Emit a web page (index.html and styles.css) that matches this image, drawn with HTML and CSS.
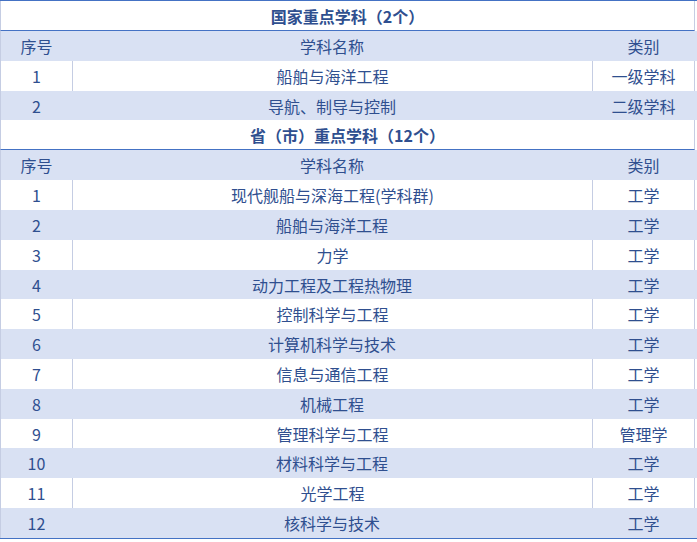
FILE: index.html
```html
<!DOCTYPE html>
<html lang="zh-CN">
<head>
<meta charset="utf-8">
<title>重点学科</title>
<link rel="stylesheet" href="styles.css">
</head>
<body>
<div class="table">
  <div class="title">国家重点学科（2个）</div>
  <div class="row head"><div class="c1">序号</div><div class="c2">学科名称</div><div class="c3">类别</div></div>
  <div class="row odd"><div class="c1">1</div><div class="c2">船舶与海洋工程</div><div class="c3">一级学科</div></div>
  <div class="row even"><div class="c1">2</div><div class="c2">导航、制导与控制</div><div class="c3">二级学科</div></div>
  <div class="title">省（市）重点学科（12个）</div>
  <div class="row head"><div class="c1">序号</div><div class="c2">学科名称</div><div class="c3">类别</div></div>
  <div class="row odd"><div class="c1">1</div><div class="c2">现代舰船与深海工程(学科群)</div><div class="c3">工学</div></div>
  <div class="row even"><div class="c1">2</div><div class="c2">船舶与海洋工程</div><div class="c3">工学</div></div>
  <div class="row odd"><div class="c1">3</div><div class="c2">力学</div><div class="c3">工学</div></div>
  <div class="row even"><div class="c1">4</div><div class="c2">动力工程及工程热物理</div><div class="c3">工学</div></div>
  <div class="row odd"><div class="c1">5</div><div class="c2">控制科学与工程</div><div class="c3">工学</div></div>
  <div class="row even"><div class="c1">6</div><div class="c2">计算机科学与技术</div><div class="c3">工学</div></div>
  <div class="row odd"><div class="c1">7</div><div class="c2">信息与通信工程</div><div class="c3">工学</div></div>
  <div class="row even"><div class="c1">8</div><div class="c2">机械工程</div><div class="c3">工学</div></div>
  <div class="row odd"><div class="c1">9</div><div class="c2">管理科学与工程</div><div class="c3">管理学</div></div>
  <div class="row even"><div class="c1">10</div><div class="c2">材料科学与工程</div><div class="c3">工学</div></div>
  <div class="row odd"><div class="c1">11</div><div class="c2">光学工程</div><div class="c3">工学</div></div>
  <div class="row even"><div class="c1">12</div><div class="c2">核科学与技术</div><div class="c3">工学</div></div>
</div>
</body>
</html>
```
FILE: styles.css
```css
html, body {
  margin: 0;
  padding: 0;
  background: #ffffff;
}
body {
  font-family: "Noto Sans CJK SC", "Noto Sans", sans-serif;
  font-size: 16px;
  color: #2f4f8f;
  width: 697px;
}
.table {
  display: flex;
  flex-direction: column;
  border-top: 1px solid #4472c4;
  border-bottom: 1px solid #4472c4;
}
.title {
  box-sizing: border-box;
  width: 695px;
  height: 30px;
  padding-top: 1px;
  line-height: 28px;
  text-align: center;
  font-weight: bold;
  background: #ffffff;
  border-left: 1px solid #c5cde3;
  border-right: 1px solid #c5cde3;
  border-bottom: 1px solid #4472c4;
}
.row {
  display: grid;
  grid-template-columns: 72px 520px 103px 2px;
  height: 29.8px;
  text-align: center;
}
.row > div {
  box-sizing: border-box;
  padding-top: 1px;
  line-height: 28.8px;
}
.head, .even {
  background: #d9e1f3;
}
.row .c1 {
  border-left: 1px solid #c5cde3;
}
.odd .c2 {
  border-left: 1px solid #c5cde3;
}
.odd .c3 {
  border-left: 1px solid #c5cde3;
  border-right: 1px solid #c5cde3;
}
```
